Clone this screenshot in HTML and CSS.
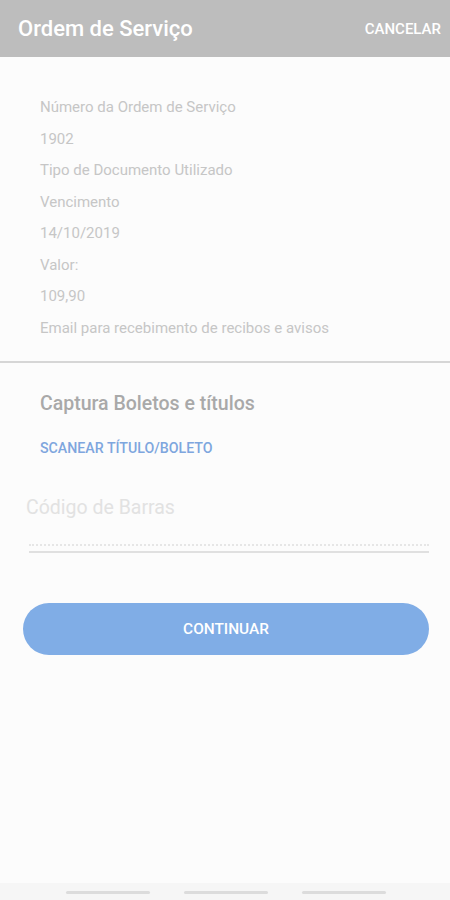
FILE: index.html
```html
<!DOCTYPE html>
<html lang="pt-BR">
<head>
    <meta charset="UTF-8">
    <meta name="viewport" content="width=device-width, initial-scale=1.0">
    <title>Ordem de Serviço</title>
    <link rel="stylesheet" href="styles.css">
</head>
<body>
    <header class="toolbar">
        <h1 class="toolbar-title">Ordem de Serviço</h1>
        <button class="toolbar-action">CANCELAR</button>
    </header>

    <section class="details">
        <p>Número da Ordem de Serviço</p>
        <p>1902</p>
        <p>Tipo de Documento Utilizado</p>
        <p>Vencimento</p>
        <p>14/10/2019</p>
        <p>Valor:</p>
        <p>109,90</p>
        <p>Email para recebimento de recibos e avisos</p>
    </section>

    <section class="capture">
        <h2 class="capture-title">Captura Boletos e títulos</h2>
        <a class="scan-link" href="#">SCANEAR TÍTULO/BOLETO</a>

        <div class="field">
            <label class="field-label">Código de Barras</label>
            <div class="field-line"></div>
        </div>

        <button class="btn-continue">CONTINUAR</button>
    </section>

    <footer class="navbar">
        <span></span>
        <span></span>
        <span></span>
    </footer>
</body>
</html>
```

FILE: styles.css
```css
html, body {
    height: 100%;
}
body {
    margin: 0;
    font-family: Roboto, "Noto Sans", sans-serif;
    background: #fcfcfc;
    display: flex;
    flex-direction: column;
}
.toolbar {
    height: 57px;
    background: #bdbdbd;
    display: flex;
    align-items: center;
    justify-content: space-between;
    padding: 0 9px 0 18px;
    flex-shrink: 0;
}
.toolbar-title {
    margin: 0;
    font-size: 22px;
    font-weight: 500;
    color: #fff;
}
.toolbar-action {
    background: none;
    border: none;
    padding: 0;
    color: #fff;
    font-family: inherit;
    font-size: 15px;
    font-weight: 500;
}
.details {
    padding: 40px 40px 12px;
    border-bottom: 2px solid #d6d6d6;
}
.details p {
    margin: 0;
    height: 31.5px;
    line-height: 20px;
    font-size: 15px;
    color: #c6c6c6;
}
.capture {
    flex: 1;
    padding: 29px 21px 0 23px;
}
.capture-title {
    margin: 0 0 0 17px;
    font-size: 19.5px;
    font-weight: 500;
    color: #a9a9a9;
    line-height: 24px;
}
.scan-link {
    display: block;
    margin: 24px 0 0 17px;
    font-size: 14.2px;
    font-weight: 500;
    color: #7ea6de;
    text-decoration: none;
    line-height: 16px;
}
.field {
    margin: 40px 0 0 3px;
}
.field-label {
    display: block;
    font-size: 19.5px;
    color: #e2e2e2;
    line-height: 24px;
}
.field-line {
    margin: 24px 0 0 3px;
    height: 5px;
    border-top: 2px dotted #e6e6e6;
    border-bottom: 2px solid #e0e0e0;
}
.btn-continue {
    display: block;
    width: 100%;
    height: 52px;
    margin-top: 50px;
    border: none;
    border-radius: 26px;
    background: #80ade6;
    color: #fff;
    font-family: inherit;
    font-size: 15.4px;
    font-weight: 500;
}
.navbar {
    height: 9px;
    background: #f6f6f6;
    display: flex;
    justify-content: center;
    gap: 34px;
    padding-top: 8px;
    padding-left: 2px;
    flex-shrink: 0;
}
.navbar span {
    width: 84px;
    height: 3px;
    border-radius: 2px;
    background: #dcdcdc;
}
```
